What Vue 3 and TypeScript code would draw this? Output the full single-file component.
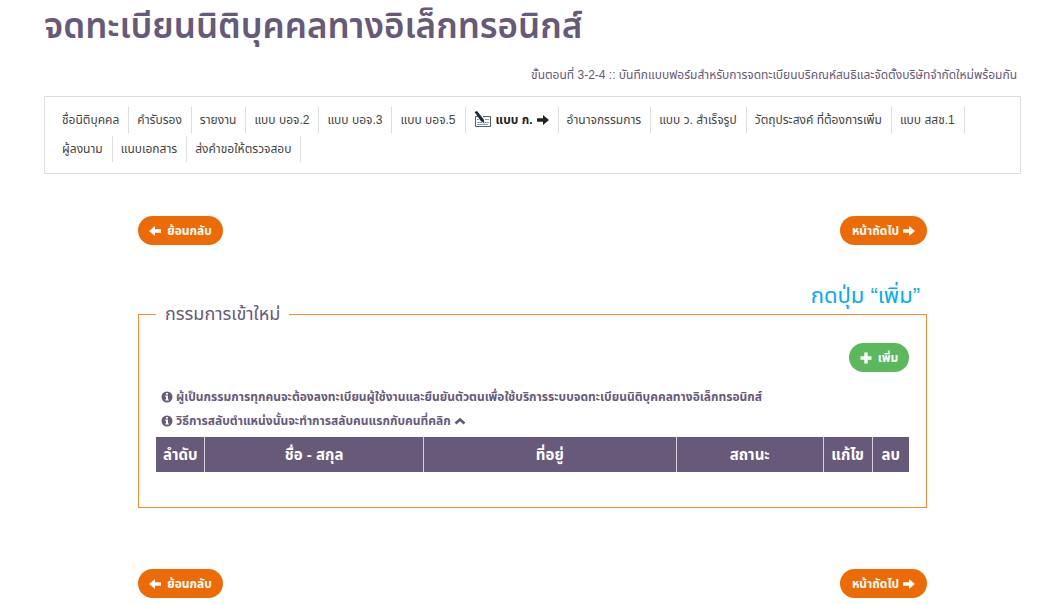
<script setup lang="ts">
interface Step {
  label: string
  active?: boolean
}

interface Column {
  label: string
  span: string
}

const steps: Step[] = [
  { label: 'ชื่อนิติบุคคล' },
  { label: 'คำรับรอง' },
  { label: 'รายงาน' },
  { label: 'แบบ บอจ.2' },
  { label: 'แบบ บอจ.3' },
  { label: 'แบบ บอจ.5' },
  { label: 'แบบ ก.', active: true },
  { label: 'อำนาจกรรมการ' },
  { label: 'แบบ ว. สำเร็จรูป' },
  { label: 'วัตถุประสงค์ ที่ต้องการเพิ่ม' },
  { label: 'แบบ สสช.1' },
  { label: 'ผู้ลงนาม' },
  { label: 'แนบเอกสาร' },
  { label: 'ส่งคำขอให้ตรวจสอบ' },
]

const notes: string[] = [
  'ผู้เป็นกรรมการทุกคนจะต้องลงทะเบียนผู้ใช้งานและยืนยันตัวตนเพื่อใช้บริการระบบจดทะเบียนนิติบุคคลทางอิเล็กทรอนิกส์',
  'วิธีการสลับตำแหน่งนั้นจะทำการสลับคนแรกกับคนที่คลิก',
]

const columns: Column[] = [
  { label: 'ลำดับ', span: '6.5%' },
  { label: 'ชื่อ - สกุล', span: '29%' },
  { label: 'ที่อยู่', span: '33.6%' },
  { label: 'สถานะ', span: '19.5%' },
  { label: 'แก้ไข', span: '6.5%' },
  { label: 'ลบ', span: '4.9%' },
]

const pagers = ['top', 'bottom']
</script>

<template>
  <div class="page">
    <h1>จดทะเบียนนิติบุคคลทางอิเล็กทรอนิกส์</h1>
    <p class="stage">ขั้นตอนที่ 3-2-4 :: บันทึกแบบฟอร์มสำหรับการจดทะเบียนบริคณห์สนธิและจัดตั้งบริษัทจำกัดใหม่พร้อมกัน</p>

    <nav class="steps">
      <a v-for="step in steps" :key="step.label" href="#" :class="{ active: step.active }">
        <svg v-if="step.active" class="form-icon" viewBox="0 0 18 18" aria-hidden="true">
          <path d="M4 5.500H1.500V15.500H16.500V5.500H9" fill="none" stroke="#4a617a" />
          <path d="M3 8.500h2M11 8.500h4M3 11.500h5M11 11.500h4M3 13.500h11" stroke="#8c9bab" fill="none" />
          <path d="M.500 1l2.500-1L9.500 8l1 4.500-3.700-2.400z" fill="#1b2b40" />
        </svg>
        <span>{{ step.label }}</span>
        <svg v-if="step.active" class="arrow" viewBox="0 0 12 10" aria-hidden="true">
          <path d="M0 3.200h6V0l6 5-6 5V6.800H0z" fill="currentColor" />
        </svg>
      </a>
    </nav>

    <main>
      <template v-for="place in pagers" :key="place">
        <div class="pager">
          <button type="button" class="pill">
            <svg class="arrow" viewBox="0 0 12 10" aria-hidden="true">
              <path d="M12 3.200H6V0L0 5l6 5V6.800h6z" fill="currentColor" />
            </svg>
            <span>ย้อนกลับ</span>
          </button>
          <button type="button" class="pill next">
            <span>หน้าถัดไป</span>
            <svg class="arrow" viewBox="0 0 12 10" aria-hidden="true">
              <path d="M0 3.200h6V0l6 5-6 5V6.800H0z" fill="currentColor" />
            </svg>
          </button>
        </div>

        <section v-if="place === 'top'" class="directors">
          <p class="callout">กดปุ่ม “เพิ่ม”</p>
          <fieldset>
            <legend>กรรมการเข้าใหม่</legend>
            <div class="tools">
              <button type="button" class="pill add">
                <svg class="plus" viewBox="0 0 12 12" aria-hidden="true">
                  <path d="M4.300 .5h3.400v3.800h3.800v3.400H7.700v3.800H4.300V7.700H.5V4.300h3.800z" fill="currentColor" />
                </svg>
                <span>เพิ่ม</span>
              </button>
            </div>
            <ul class="notes">
              <li v-for="(note, i) in notes" :key="i">
                <svg class="info" viewBox="0 0 12 12" aria-hidden="true">
                  <circle cx="6" cy="6" r="5.500" fill="currentColor" />
                  <path d="M5 2h2v1.600H5zM4.200 4.600H7V8.400h.9v1.200H4.200V8.400H5V5.800h-.8z" fill="#fff" />
                </svg>
                <span>{{ note }}</span>
                <svg v-if="i === 1" class="chevron" viewBox="0 0 12 8" aria-hidden="true">
                  <path d="M1.500 6.500L6 2.500l4.500 4" fill="none" stroke="currentColor" stroke-width="2.800" />
                </svg>
              </li>
            </ul>
            <table>
              <colgroup>
                <col v-for="column in columns" :key="column.label" :style="{ width: column.span }" />
              </colgroup>
              <thead>
                <tr>
                  <th v-for="column in columns" :key="column.label" scope="col">{{ column.label }}</th>
                </tr>
              </thead>
            </table>
          </fieldset>
        </section>
      </template>
    </main>
  </div>
</template>

<style>
body {
  margin: 0;
  background: #fff;
}
</style>

<style scoped>
.page {
  box-sizing: border-box;
  padding: 0 29px 5px 44px;
  color: #67597a;
  font-family: "Liberation Sans", "Noto Sans Thai", "Noto Sans", sans-serif;
}

h1 {
  margin: 0;
  font-size: 35px;
  line-height: 52px;
  font-weight: 600;
  white-space: nowrap;
}

.stage {
  margin: 13px 4px 11px 0;
  font-size: 12px;
  line-height: 20px;
  text-align: right;
}

.steps {
  display: flex;
  flex-wrap: wrap;
  gap: 3px 0;
  padding: 10px 9px 11px;
  border: 1px solid #ddd;
}

.steps a {
  display: flex;
  align-items: center;
  gap: 4px;
  height: 26px;
  padding: 0 9px 0 8px;
  border-right: 1px solid #ddd;
  color: #444;
  font-size: 12px;
  text-decoration: none;
  white-space: nowrap;
}

.steps .active {
  color: #222;
  font-weight: bold;
}

.form-icon {
  width: 18px;
  height: 18px;
}

.arrow {
  width: 12px;
  height: 10px;
}

main {
  margin: 42px 94px 0;
}

.pager {
  display: flex;
  justify-content: space-between;
}

.pill {
  display: flex;
  align-items: center;
  justify-content: center;
  gap: 6px;
  min-width: 85px;
  height: 29px;
  padding: 0 10px;
  border: 0;
  border-radius: 15px;
  background: #ed6b06;
  color: #fff;
  font-family: inherit;
  font-size: 12px;
  font-weight: bold;
  white-space: nowrap;
}

.next {
  gap: 4px;
  min-width: 87px;
}

.directors {
  padding-top: 43px;
  margin-bottom: 61px;
}

.callout {
  margin: 0 7px 0 0;
  color: #00adef;
  font-size: 22px;
  line-height: 16px;
  text-align: right;
}

fieldset {
  min-width: 0;
  margin: 0;
  padding: 19px 17px 35px;
  border: 1px solid #f28c3a;
}

legend {
  padding: 0 9px;
  font-size: 18px;
  line-height: 20px;
}

.tools {
  display: flex;
  justify-content: flex-end;
}

.add {
  min-width: 60px;
  background: #5cb85c;
}

.plus {
  width: 12px;
  height: 12px;
}

.notes {
  margin: 13px 0 4px;
  padding: 0 0 0 5px;
  list-style: none;
  font-size: 12px;
  font-weight: bold;
  line-height: 24px;
}

.notes li {
  display: flex;
  align-items: center;
  gap: 3px;
  white-space: nowrap;
}

.info {
  width: 12px;
  height: 12px;
}

.chevron {
  width: 12px;
  height: 8px;
}

table {
  width: 100%;
  border-collapse: collapse;
  table-layout: fixed;
}

th {
  height: 35px;
  padding: 0;
  border-right: 1px solid #d5d0da;
  background: #67597a;
  color: #fff;
  font-size: 15px;
  line-height: 20px;
}

th:last-child {
  border-right: 0;
}
</style>
